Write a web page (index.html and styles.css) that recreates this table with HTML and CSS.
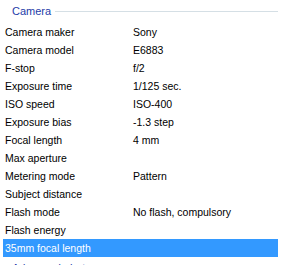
FILE: index.html
```html
<!DOCTYPE html>
<html lang="en">
<head>
    <meta charset="UTF-8">
    <title>Properties - Details</title>
    <link rel="stylesheet" href="styles.css">
</head>
<body>
    <div class="details">
        <div class="group">
            <span class="group-title">Camera</span>
            <span class="group-line"></span>
        </div>
        <div class="row"><span class="name">Camera maker</span><span class="value">Sony</span></div>
        <div class="row"><span class="name">Camera model</span><span class="value">E6883</span></div>
        <div class="row"><span class="name">F-stop</span><span class="value">f/2</span></div>
        <div class="row"><span class="name">Exposure time</span><span class="value">1/125 sec.</span></div>
        <div class="row"><span class="name">ISO speed</span><span class="value">ISO-400</span></div>
        <div class="row"><span class="name">Exposure bias</span><span class="value">-1.3 step</span></div>
        <div class="row"><span class="name">Focal length</span><span class="value">4 mm</span></div>
        <div class="row"><span class="name">Max aperture</span><span class="value"></span></div>
        <div class="row"><span class="name">Metering mode</span><span class="value">Pattern</span></div>
        <div class="row"><span class="name">Subject distance</span><span class="value"></span></div>
        <div class="row"><span class="name">Flash mode</span><span class="value">No flash, compulsory</span></div>
        <div class="row"><span class="name">Flash energy</span><span class="value"></span></div>
        <div class="row selected"><span class="name">35mm focal length</span><span class="value"></span></div>
        <div class="group">
            <span class="group-title">Advanced photo</span>
            <span class="group-line"></span>
        </div>
    </div>
</body>
</html>
```

FILE: styles.css
```css
html, body {
    margin: 0;
    background: #ffffff;
    overflow: hidden;
}
.details {
    font-family: "Liberation Sans", Arial, sans-serif;
    font-size: 10.5px;
    color: #000000;
    padding: 0 3px;
}
.group {
    display: flex;
    align-items: center;
    height: 23px;
    padding-left: 9px;
    padding-bottom: 1px;
    box-sizing: border-box;
}
.group-title {
    color: #1e3ca8;
    font-size: 11px;
    margin-right: 4px;
}
.group-line {
    flex: 1;
    height: 1px;
    background: #d5dfe5;
}
.row {
    display: flex;
    height: 18px;
    align-items: center;
}
.name {
    width: 130px;
    padding-left: 2px;
    box-sizing: border-box;
}
.value {
    flex: 1;
}
.selected {
    background: #3399ff;
    color: #ffffff;
}
```
